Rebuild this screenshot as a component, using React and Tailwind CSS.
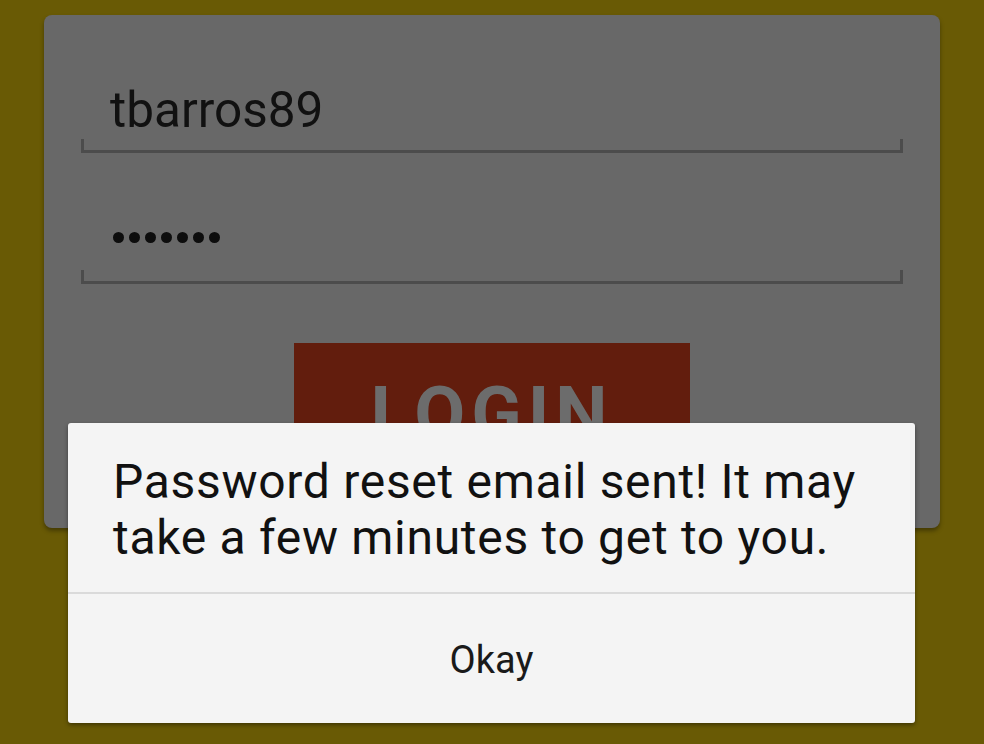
const DOTS = [0, 1, 2, 3, 4, 5, 6];

function Underline() {
  return <div className="h-[14px] mx-[37px] border-x-[3px] border-b-[3px] border-[#4c4c4c]" />;
}

export default function App() {
  return (
    <div
      className="relative w-[984px] h-[744px] overflow-hidden bg-[#695a05]"
      style={{ fontFamily: 'Roboto, "Noto Sans", sans-serif' }}
    >
      {/* login card, dimmed behind the dialog */}
      <div className="ml-[44px] mt-[15px] w-[896px] h-[513px] rounded-[8px] bg-[#686868] shadow-[0_3px_4px_rgba(0,0,0,0.35)] flex flex-col">
        <div className="mt-[70px] pl-[66px] h-[50px] text-[49.5px] leading-[50px] text-[#111]">tbarros89</div>
        <div className="mt-[4px]">
          <Underline />
        </div>

        <div className="mt-[79px] pl-[69px] flex gap-[5px] h-[11px]">
          {DOTS.map((d) => (
            <span key={d} className="w-[11px] h-[11px] rounded-full bg-[#0d0d0d]" />
          ))}
        </div>
        <div className="mt-[27px]">
          <Underline />
        </div>

        <div className="mt-[59px] mx-auto w-[396px] h-[120px] bg-[#621d0d] flex justify-center pt-[34px]">
          <span className="text-[74px] leading-[74px] font-bold tracking-[6px] text-[#6c6c6c]">LOGIN</span>
        </div>
      </div>

      {/* dialog */}
      <div className="absolute left-[68px] top-[423px] w-[847px] h-[300px] rounded-[3px] bg-[#f4f4f4] shadow-[0_2px_4px_rgba(0,0,0,0.4)] flex flex-col">
        <div className="h-[169px] pt-[31px] pl-[45px] pr-[10px] text-[48px] leading-[56px] tracking-[0.7px] text-[#111]">
          Password reset email sent! It may take a few minutes to get to you.
        </div>
        <div className="h-[2px] bg-[#dadada]" />
        <div className="flex-1 flex items-center justify-center text-[38px] text-[#1a1a1a] pt-[4px]">Okay</div>
      </div>
    </div>
  );
}
